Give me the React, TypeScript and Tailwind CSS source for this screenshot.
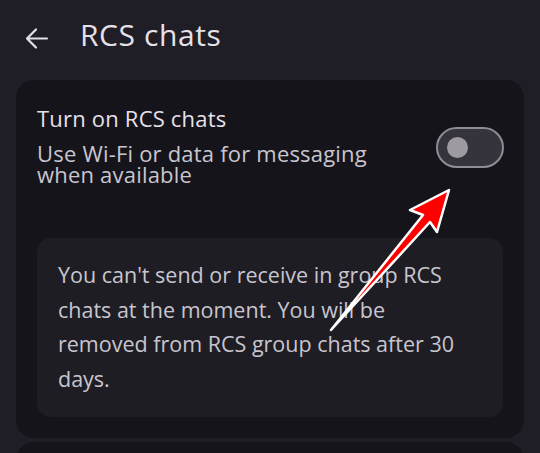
const font = { fontFamily: "'Open Sans', Roboto, sans-serif" };

function BackArrow() {
  return (
    <svg width="24" height="24" viewBox="0 0 24 24" className="ml-[25px] mt-[11px] shrink-0 text-[#e4e0ea]">
      <path d="M2 12.5H22M11 3.5L2 12.5L11 21.5" fill="none" stroke="currentColor" strokeWidth="2.2" strokeLinecap="round" strokeLinejoin="round" />
    </svg>
  );
}

function Toggle() {
  return (
    <div className="flex h-[41px] w-[68px] shrink-0 items-center rounded-full border-2 border-[#8f8c95] bg-[#35333b] pl-[9px]">
      <span className="h-[21px] w-[21px] rounded-full bg-[#9d9aa2]" />
    </div>
  );
}

function RedArrow() {
  return (
    <svg className="pointer-events-none absolute left-0 top-0" width="540" height="453" viewBox="0 0 540 453">
      <polygon
        points="331,330 423,215 410,210 449,190 437,232 430,222 331,330"
        fill="#ff0000"
        stroke="#ffffff"
        strokeWidth="2.5"
        strokeLinejoin="round"
      />
    </svg>
  );
}

export default function App() {
  return (
    <div className="relative h-[453px] w-[540px] overflow-hidden bg-[#1f1d26]" style={font}>
      <header className="flex h-[80px] items-start pt-[15px]">
        <BackArrow />
        <h1 className="ml-[31px] text-[30px] leading-[40px] font-normal tracking-[0.6px] text-[#e6e1e9]">RCS chats</h1>
      </header>

      <section className="mx-[16px] rounded-[18px] bg-[#15141b] px-[21px] pb-[21px] pt-[25px]">
        <div className="flex items-start justify-between">
          <div className="pr-[20px]">
            <p className="text-[22px] leading-[26px] tracking-[0.2px] text-[#e6e1e9]">Turn on RCS chats</p>
            <p className="mt-[12px] text-[22px] leading-[21px] tracking-[0.2px] text-[#c9c5cf]">
              Use Wi-Fi or data for messaging
              <br />
              when available
            </p>
          </div>
          <div className="mr-[-1px] mt-[22px]">
            <Toggle />
          </div>
        </div>

        <div className="mt-[53px] rounded-[14px] bg-[#1e1d24] px-[21px] pb-[20px] pt-[20px]">
          <p className="text-[21.5px] leading-[34.7px] text-[#c9c5cf]">
            You can't send or receive in group RCS
            <br />
            chats at the moment. You will be
            <br />
            removed from RCS group chats after 30
            <br />
            days.
          </p>
        </div>
      </section>

      <section className="mx-[16px] mt-[4px] h-[40px] rounded-t-[18px] bg-[#15141b]" />

      <RedArrow />
    </div>
  );
}
